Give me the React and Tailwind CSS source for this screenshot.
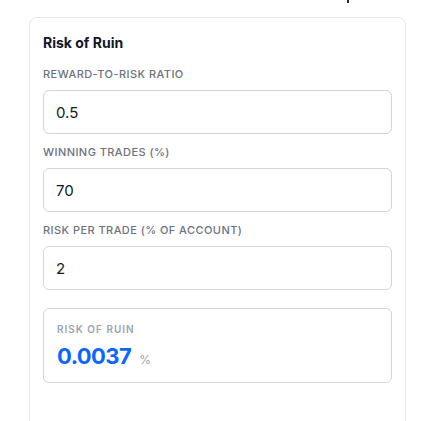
import React from 'react';

const fields = [
  { label: 'Reward-to-Risk Ratio', value: '0.5' },
  { label: 'Winning Trades (%)', value: '70' },
  { label: 'Risk per Trade (% of Account)', value: '2' },
];

const RiskOfRuin = () => {
  return (
    <div className="min-h-[421px] bg-white" style={{ fontFamily: 'Inter, "Noto Sans", sans-serif' }}>
      {/* tail of the heading above, cut off by the viewport */}
      <div className="h-[17px]">
        <div className="ml-[347px] h-[3px] w-[2px] bg-[#1f2937]" />
      </div>

      <div className="ml-[29px] w-[377px] h-[420px] rounded-lg border border-[#e5e7eb] bg-white px-[13px] pt-[14px]">
        <h3 className="text-[14px] leading-[22px] font-bold text-[#111827]">Risk of Ruin</h3>

        <div className="mt-3 flex flex-col gap-[10px]">
          {fields.map((field) => (
            <div key={field.label}>
              <label className="block text-[11px] leading-4 font-medium uppercase tracking-[0.04em] text-[#6b7280] mb-2">
                {field.label}
              </label>
              <input
                type="text"
                defaultValue={field.value}
                className="block w-full h-11 rounded-md border border-[#d1d5db] px-3 text-[15px] text-[#111827] outline-none"
              />
            </div>
          ))}
        </div>

        <div className="mt-[18px] h-[75px] rounded-md border border-[#d1d5db] px-[13px] pt-[13px]">
          <p className="text-[10px] leading-[14px] font-semibold uppercase tracking-widest text-[#9ca3af]">
            Risk of Ruin
          </p>
          <p className="mt-1 flex items-baseline">
            <span className="text-[22px] leading-8 font-bold tracking-tight text-[#0a66ff]">0.0037</span>
            <span className="ml-2 text-xs text-[#9ca3af]">%</span>
          </p>
        </div>
      </div>
    </div>
  );
};

export default function App() {
  return <RiskOfRuin />;
}
